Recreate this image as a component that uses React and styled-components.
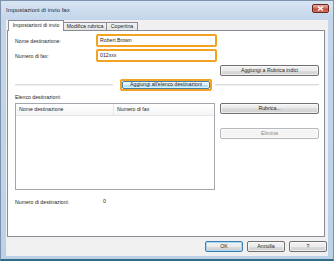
import styled, { createGlobalStyle } from 'styled-components'

const GlobalStyle = createGlobalStyle`
  html, body {
    margin: 0;
    padding: 0;
  }
  body {
    font-family: 'Liberation Sans', Arial, sans-serif;
    font-size: 5.2px;
    color: #262626;
    background: #ffffff;
  }
  * {
    box-sizing: border-box;
  }
`

const ORANGE = '#f2a324'

const Window = styled.div`
  width: 334px;
  height: 261px;
  display: flex;
  flex-direction: column;
  border: 1px solid #7d93ab;
  border-bottom: 2px solid #2f6d86;
  background: linear-gradient(to bottom, #d8e4f2 0, #c4d6eb 18px, #bcd1e8 100%);
`

const TitleBar = styled.div`
  height: 19px;
  flex: none;
  display: flex;
  justify-content: space-between;
  padding: 0 4px 0 5px;
`

const Title = styled.div`
  font-size: 6px;
  line-height: 19px;
  color: #1e2b3a;
`

const CloseButton = styled.div`
  margin-top: 3px;
  width: 17px;
  height: 9px;
  border: 1px solid #6c2a24;
  border-radius: 2px;
  background: linear-gradient(to bottom, #e9ab9e 0, #d67865 45%, #c4493b 55%, #d2725f 100%);
  display: flex;
  align-items: center;
  justify-content: center;
`

const Client = styled.div`
  flex: 1;
  margin: 0 5px 3px 5px;
  padding: 0 1px;
  background: #f0f0f0;
  display: flex;
  flex-direction: column;
`

const TabStrip = styled.div`
  height: 10px;
  flex: none;
  display: flex;
  align-items: flex-end;
  padding-left: 1px;
`

const Tab = styled.div`
  position: relative;
  width: ${p => p.$w}px;
  height: ${p => (p.$active ? 11 : 8)}px;
  margin-bottom: ${p => (p.$active ? -1 : 0)}px;
  margin-left: ${p => (p.$first ? 0 : -1)}px;
  z-index: ${p => (p.$active ? 2 : 1)};
  border: 1px solid #898c95;
  border-bottom: none;
  background: ${p => (p.$active ? '#ffffff' : 'linear-gradient(to bottom, #f3f3f3, #e4e4e4)')};
  display: flex;
  justify-content: center;
  align-items: ${p => (p.$active ? 'flex-start' : 'center')};
  padding-top: ${p => (p.$active ? 2 : 0)}px;
  line-height: 1;
  white-space: nowrap;
`

const Panel = styled.div`
  flex: 1;
  margin-right: 2px;
  border: 1px solid #898c95;
  background: #ffffff;
  padding: 3px 5px 0 7px;
  display: flex;
  flex-direction: column;
`

const FieldRow = styled.div`
  display: flex;
  align-items: center;
  height: 13px;
  margin-top: ${p => p.$gap || 0}px;
`

const Label = styled.div`
  width: ${p => p.$w || 81}px;
  flex: none;
  padding-top: 1px;
  white-space: nowrap;
`

const Highlight = styled.div`
  width: ${p => p.$w}px;
  height: ${p => p.$h}px;
  flex: none;
  border: 2px solid ${ORANGE};
  border-radius: 2px;
  display: flex;
`

const Field = styled.div`
  flex: 1;
  background: #ffffff;
  padding-left: 2px;
  display: flex;
  align-items: center;
  line-height: 1;
`

const ButtonRow = styled.div`
  display: flex;
  justify-content: flex-end;
  margin-top: 3px;
`

const Button = styled.div`
  width: ${p => (p.$w ? `${p.$w}px` : '100%')};
  height: ${p => (p.$w ? '11px' : '100%')};
  flex: none;
  border: 1px solid ${p => (p.$default || p.$hot ? '#3c7fb1' : p.$disabled ? '#b5b9bc' : '#707070')};
  border-radius: 2px;
  background: ${p =>
    p.$hot
      ? 'linear-gradient(to bottom, #eaf6fd 0, #d9f0fc 50%, #bee6fd 50%, #a7d9f5 100%)'
      : p.$disabled
      ? '#f4f4f4'
      : 'linear-gradient(to bottom, #f2f2f2 0, #ebebeb 50%, #dddddd 50%, #cfcfcf 100%)'};
  box-shadow: ${p => (p.$default ? 'inset 0 0 0 1px #a6d8f6' : 'inset 0 0 0 1px rgba(255,255,255,0.6)')};
  color: ${p => (p.$disabled ? '#8a8a8a' : '#262626')};
  display: flex;
  align-items: center;
  justify-content: center;
  line-height: 1;
  white-space: nowrap;
  margin-top: ${p => p.$top || 0}px;
`

const SeparatorRow = styled.div`
  display: flex;
  align-items: center;
  height: 12px;
  margin-top: 3px;
`

const Line = styled.div`
  height: 2px;
  border-top: 1px solid #dadada;
  border-bottom: 1px solid #f2f2f2;
  width: ${p => (p.$w ? `${p.$w}px` : 'auto')};
  flex: ${p => (p.$w ? 'none' : 1)};
  margin: 0 ${p => p.$mr || 0}px 0 ${p => p.$ml || 0}px;
`

const TextLine = styled.div`
  line-height: 7px;
  margin-top: ${p => p.$top || 0}px;
  display: flex;
  white-space: nowrap;
`

const ListRow = styled.div`
  display: flex;
  margin-top: 2px;
`

const ListView = styled.div`
  width: 200px;
  height: 87px;
  flex: none;
  border: 1px solid #a3a7ad;
  background: #ffffff;
`

const ListHeader = styled.div`
  height: 12px;
  display: flex;
  border-bottom: 1px solid #e5e5e5;
  background: linear-gradient(to bottom, #ffffff, #f4f5f7);
`

const Column = styled.div`
  width: ${p => (p.$w ? `${p.$w}px` : 'auto')};
  flex: ${p => (p.$w ? 'none' : 1)};
  padding-left: 3px;
  display: flex;
  align-items: center;
  line-height: 1;
  border-right: ${p => (p.$w ? '1px solid #e3e4e6' : 'none')};
`

const SideColumn = styled.div`
  width: 99px;
  margin-left: 5px;
  display: flex;
  flex-direction: column;
`

const Footer = styled.div`
  height: 19px;
  flex: none;
  display: flex;
  justify-content: flex-end;
  gap: 4px;
  padding-top: 4px;
`

const CloseGlyph = () => (
  <svg width="7" height="5" viewBox="0 0 7 5">
    <path d="M1 0.5 L6 4.5 M6 0.5 L1 4.5" stroke="#ffffff" strokeWidth="1.4" />
  </svg>
)

export default function App() {
  return (
    <>
      <GlobalStyle />
      <Window>
        <TitleBar>
          <Title>Impostazioni di invio fax</Title>
          <CloseButton>
            <CloseGlyph />
          </CloseButton>
        </TitleBar>
        <Client>
          <TabStrip>
            <Tab $w={56} $active $first>Impostazioni di invio</Tab>
            <Tab $w={44}>Modifica rubrica</Tab>
            <Tab $w={32}>Copertina</Tab>
          </TabStrip>
          <Panel>
            <FieldRow>
              <Label>Nome destinazione:</Label>
              <Highlight $w={121} $h={13}>
                <Field>Robert Brown</Field>
              </Highlight>
            </FieldRow>
            <FieldRow $gap={2}>
              <Label>Numero di fax:</Label>
              <Highlight $w={121} $h={13}>
                <Field>012xxx</Field>
              </Highlight>
            </FieldRow>
            <ButtonRow>
              <Button $w={99}>Aggiungi a Rubrica indici</Button>
            </ButtonRow>
            <SeparatorRow>
              <Line $w={98} $mr={7} />
              <Highlight $w={92} $h={12}>
                <Button $hot>Aggiungi all'elenco destinazioni</Button>
              </Highlight>
              <Line $ml={3} />
            </SeparatorRow>
            <TextLine $top={3}>Elenco destinazioni:</TextLine>
            <ListRow>
              <ListView>
                <ListHeader>
                  <Column $w={98}>Nome destinazione</Column>
                  <Column>Numero di fax</Column>
                </ListHeader>
              </ListView>
              <SideColumn>
                <Button $w={99}>Rubrica...</Button>
                <Button $w={99} $top={14} $disabled>Elimina</Button>
              </SideColumn>
            </ListRow>
            <TextLine $top={8}>
              <Label $w={88}>Numero di destinazioni:</Label>
              <span>0</span>
            </TextLine>
          </Panel>
          <Footer>
            <Button $w={38} $default>OK</Button>
            <Button $w={38}>Annulla</Button>
            <Button $w={38}>?</Button>
          </Footer>
        </Client>
      </Window>
    </>
  )
}
